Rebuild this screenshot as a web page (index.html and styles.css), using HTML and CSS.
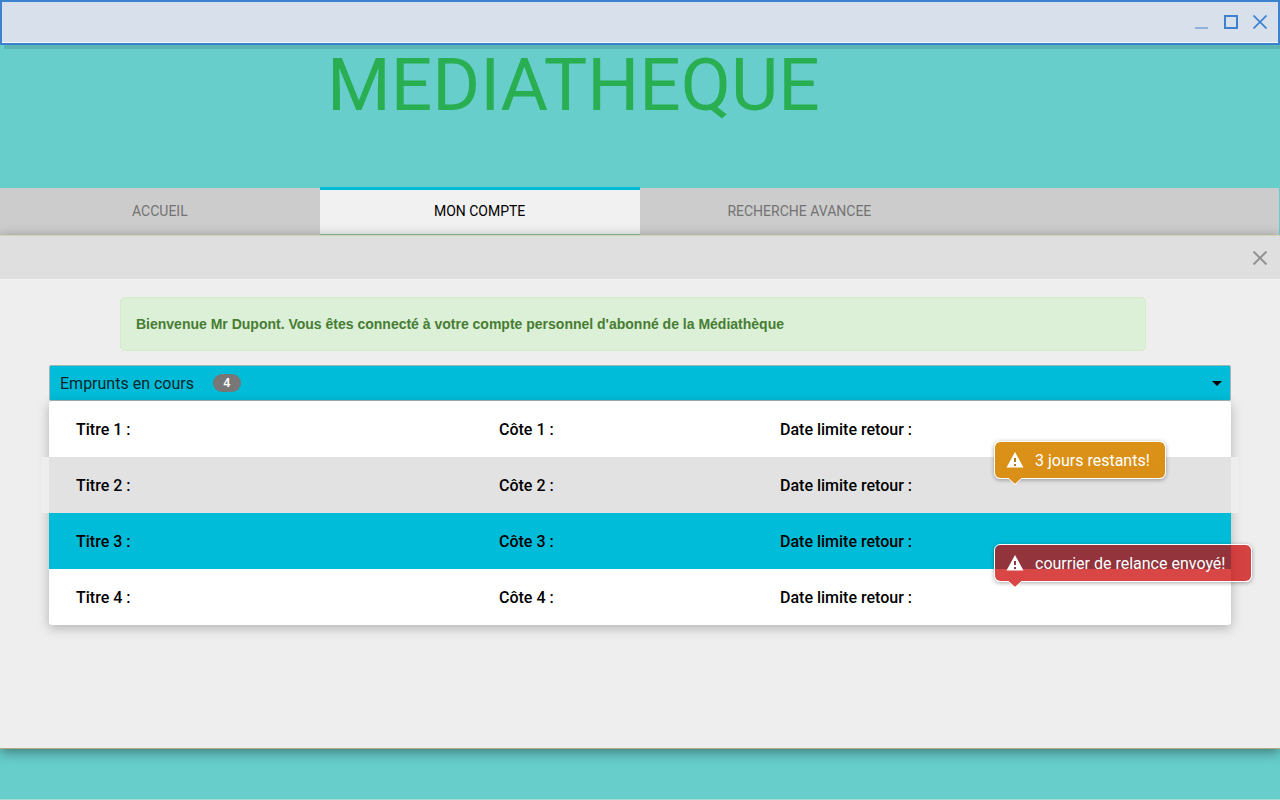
FILE: index.html
```html
<!DOCTYPE html>
<html lang="fr">
<head>
<meta charset="utf-8">
<title>Médiathèque</title>
<link rel="stylesheet" href="styles.css">
</head>
<body>
<div class="titlebar">
  <button class="win-btn" aria-label="Réduire"><svg width="14" height="14" viewBox="0 0 14 14"><path d="M0 13H13" stroke="#8fb2dc" stroke-width="2"/></svg></button>
  <button class="win-btn" aria-label="Agrandir"><svg width="14" height="14" viewBox="0 0 14 14"><path d="M1 1H13V13H1Z" fill="none" stroke="#3d82cf" stroke-width="2"/></svg></button>
  <button class="win-btn" aria-label="Fermer la fenêtre"><svg width="14" height="14" viewBox="0 0 14 14"><path d="M.5.5 13.5 13.5M13.5.5.5 13.5" stroke="#3d82cf" stroke-width="1.7"/></svg></button>
</div>
<header class="banner"><h1 class="brand">MEDIATHEQUE</h1></header>
<nav class="tabs">
  <a class="tab" href="#accueil">ACCUEIL</a>
  <a class="tab tab-active" href="#compte" aria-current="page">MON COMPTE</a>
  <a class="tab" href="#recherche">RECHERCHE AVANCEE</a>
  <span class="tab"></span>
</nav>
<main class="panel">
  <div class="panel-head">
    <button class="close" aria-label="Fermer"><svg width="14" height="14" viewBox="0 0 14 14"><path d="M.5.5 13.5 13.5M13.5.5.5 13.5" stroke="#929292" stroke-width="2"/></svg></button>
  </div>
  <div class="panel-body">
    <p class="alert">Bienvenue Mr Dupont. Vous êtes connecté à votre compte personnel d'abonné de la Médiathèque</p>
    <button class="dropdown" aria-expanded="true">
      <span>Emprunts en cours</span><span class="badge">4</span>
      <svg class="caret" width="10" height="5" viewBox="0 0 10 5"><path d="M0 0H10L5 5Z"/></svg>
    </button>
    <table class="loans">
      <colgroup><col class="col-title"><col class="col-code"><col></colgroup>
      <tbody>
        <tr class="loan"><td>Titre 1 :</td><td>Côte 1 :</td><td>Date limite retour :</td></tr>
        <tr class="loan loan-grey"><td>Titre 2 :</td><td>Côte 2 :</td>
          <td class="due">Date limite retour :
            <span class="tip tip-warning">
              <svg width="18" height="16" viewBox="0 0 18 16"><path d="M9 0 17.5 15.5H.5Z" fill="#fff"/><path d="M8 6h2v4H8zM8 12h2v2H8z" fill="#b87716"/></svg>
              3 jours restants!
              <svg class="tip-arrow" width="16" height="8" viewBox="0 0 16 8"><path d="M1 0 8 6 15 0Z" fill="#da8f1b"/><path d="M1 0 8 6.5 15 0" fill="none" stroke="#fff"/></svg>
            </span></td></tr>
        <tr class="loan loan-active"><td>Titre 3 :</td><td>Côte 3 :</td><td>Date limite retour :</td></tr>
        <tr class="loan"><td>Titre 4 :</td><td>Côte 4 :</td>
          <td class="due">Date limite retour :
            <span class="tip tip-danger">
              <svg width="18" height="16" viewBox="0 0 18 16"><path d="M9 0 17.5 15.5H.5Z" fill="#fff"/><path d="M8 6h2v4H8zM8 12h2v2H8z" fill="#90353c"/></svg>
              courrier de relance envoyé!
              <svg class="tip-arrow" width="16" height="8" viewBox="0 0 16 8"><path d="M1 0 8 6 15 0Z" fill="#d84646"/><path d="M1 0 8 6.5 15 0" fill="none" stroke="#fff"/></svg>
            </span></td></tr>
      </tbody>
    </table>
  </div>
</main>
<footer class="footer"></footer>
</body>
</html>
```
FILE: styles.css
```css
* { box-sizing: border-box; }
body {
  margin: 0;
  min-height: 100vh;
  display: flex;
  flex-direction: column;
  background: #67cecc;
  font-family: Roboto, sans-serif;
}
button { font: inherit; cursor: pointer; }
svg { display: block; }

.titlebar {
  display: flex;
  align-items: center;
  justify-content: flex-end;
  gap: 15px;
  height: 45px;
  padding: 0 11px 2px 16px;
  background: #d8e1eb;
  border: 2px solid #3d82cf;
  box-shadow: inset 0 -1px 0 #f4f6f8, 4px 4px 0 rgba(0, 0, 0, .12);
}
.win-btn, .close { padding: 0; border: 0; background: none; }

.banner { height: 142px; padding-left: 327px; }
.brand {
  margin: 0;
  font-size: 73px;
  line-height: 80px;
  font-weight: 400;
  color: #2aae52;
}

.tabs { display: flex; align-items: flex-end; margin-right: 1px; height: 48px; }
.tab {
  flex: 1 1 0;
  height: 47px;
  background: #ccc;
  color: #737373;
  font-size: 14px;
  line-height: 47px;
  text-align: center;
  text-decoration: none;
}
.tab-active {
  height: 48px;
  background: #f1f1f1;
  border-top: 3px solid #00bcd6;
  border-bottom: 1px solid #8cc7a4;
  color: #000;
  line-height: 42px;
}

.panel {
  position: relative;
  flex: 1;
  background: #eee;
  border-top: 1px solid #d3d3b4;
  border-bottom: 1px solid #b5a984;
  box-shadow: 0 3px 12px rgba(0, 0, 0, .42);
}
.panel-head {
  display: flex;
  align-items: center;
  justify-content: flex-end;
  height: 44px;
  padding-right: 13px;
  background: #dfdfdf;
  border-bottom: 1px solid #f3f3f3;
}
.panel-body { padding: 17px 49px 32px; }

.alert {
  margin: 0 85px 14px 71px;
  padding: 15px;
  border: 1px solid #d5eac8;
  border-radius: 5px;
  background: #dcefd7;
  color: #467d32;
  font: bold 14px/22px "Liberation Sans", Arial, sans-serif;
}

.dropdown {
  display: flex;
  align-items: center;
  width: 100%;
  height: 36px;
  padding: 0 8px 0 10px;
  border: 1px solid #a5b5b8;
  border-radius: 2px;
  background: #00bcd8;
  color: #06272c;
  font-size: 16px;
}
.badge {
  margin-left: 19px;
  width: 28px;
  border-radius: 9px;
  background: #777;
  color: #fff;
  font: bold 12px/18px "Liberation Sans", Arial, sans-serif;
  text-align: center;
}
.caret { margin-left: auto; fill: #000; }

.loans {
  width: 100%;
  table-layout: fixed;
  border-spacing: 0;
  border-radius: 3px;
  background: #fff;
  box-shadow: 0 3px 12px rgba(0, 0, 0, .25);
  font-size: 16px;
  font-weight: 500;
  color: #000;
}
.col-title { width: 423px; }
.col-code { width: 281px; }
.loan td { height: 56px; padding: 0 0 0 27px; }
.loan-grey { background: #e2e2e2; box-shadow: -8px 0 0 #eee, 8px 0 0 #eee; }
.loan-active { background: #00bcd8; }
.due { position: relative; }

.tip {
  position: absolute;
  left: 241px;
  z-index: 1;
  display: flex;
  align-items: center;
  gap: 11px;
  height: 38px;
  padding: 0 15px 0 11px;
  border: 1px solid #fff;
  border-radius: 6px;
  background-clip: padding-box;
  box-shadow: 0 1px 4px rgba(0, 0, 0, .35);
  color: #fff;
  font-weight: 400;
  white-space: nowrap;
}
.tip-warning { top: -16px; background-color: rgba(217, 138, 10, .94); }
.tip-danger { top: -25px; padding-right: 26px; background-color: rgba(201, 2, 2, .73); }
.tip-arrow { position: absolute; top: 100%; left: 12px; }

.footer { height: 51px; border-bottom: 1px solid #a6dcd4; }
```
